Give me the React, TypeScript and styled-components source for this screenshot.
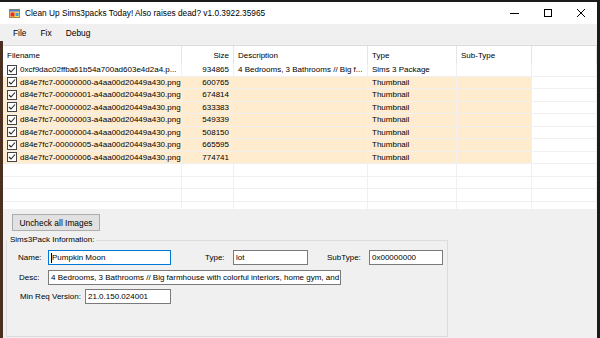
import React from "react";
import styled, { createGlobalStyle } from "styled-components";

const GlobalStyle = createGlobalStyle`
  html, body {
    margin: 0;
    padding: 0;
    background: #1b1b1b;
    overflow: hidden;
  }
  * { box-sizing: border-box; }
`;

const Screen = styled.div`
  width: 600px;
  height: 338px;
  padding-top: 2px;
  font-family: "Liberation Sans", Arial, sans-serif;
  color: #000;
`;

const Window = styled.div`
  width: 597px;
  height: 336px;
  display: flex;
  flex-direction: column;
  background: #f0f0f0;
`;

const TitleBar = styled.div`
  height: 22px;
  background: #fff;
  display: flex;
  align-items: center;
  padding-left: 9px;
`;

const Title = styled.span`
  margin-left: 5px;
  font-size: 8.3px;
  flex: 1;
  white-space: nowrap;
`;

const Controls = styled.div`
  display: flex;
  height: 100%;
`;

const ControlButton = styled.div`
  width: 33px;
  height: 100%;
  display: flex;
  align-items: center;
  justify-content: center;
`;

const MenuBar = styled.div`
  height: 17px;
  display: flex;
  align-items: center;
  padding-left: 6px;
  font-size: 8.4px;
`;

const MenuItem = styled.span`
  padding: 0 7px;
`;

const ClientArea = styled.div`
  flex: 1;
  display: flex;
  flex-direction: column;
  border-left: 3px solid #4a3020;
  padding-top: 4px;
`;

const ListView = styled.div`
  height: 164px;
  background: #fff;
  border-top: 1px solid #dcdcdc;
  overflow: hidden;
  font-size: 8px;
`;

const Row = styled.div`
  display: grid;
  grid-template-columns: 179px 52px 134px 89px 75px 1fr;
  height: 12.5px;
`;

const HeaderRow = styled(Row)`
  height: 18px;
`;

const HeaderCell = styled.div<{ $right?: boolean }>`
  display: flex;
  align-items: center;
  justify-content: ${(p) => (p.$right ? "flex-end" : "flex-start")};
  padding: 0 4px;
  border-right: 1px solid #e5e5e5;
  white-space: nowrap;
`;

const Cell = styled.div<{ $right?: boolean; $hl?: boolean }>`
  display: flex;
  align-items: center;
  justify-content: ${(p) => (p.$right ? "flex-end" : "flex-start")};
  padding: 0 4px;
  background: ${(p) => (p.$hl ? "#ffebcd" : "transparent")};
  border-right: 1px solid #f0f0f0;
  border-bottom: 1px solid #f0f0f0;
  white-space: nowrap;
  overflow: hidden;
`;

const Check = styled.span`
  width: 10px;
  height: 10px;
  flex: none;
  border: 1px solid #444;
  background: #fff;
  margin-right: 3px;
  display: flex;
  align-items: center;
  justify-content: center;
`;

const Bottom = styled.div`
  flex: 1;
  display: flex;
  flex-direction: column;
  padding: 5px 0 0 9px;
`;

const Button = styled.div`
  width: 88px;
  height: 17px;
  background: #e1e1e1;
  border: 1px solid #adadad;
  font-size: 8.4px;
  display: flex;
  align-items: center;
  justify-content: center;
  white-space: nowrap;
`;

const Group = styled.div`
  margin: 9px 0 0 -6px;
  width: 442px;
  height: 97px;
  border: 1px solid #dcdcdc;
  border-top: none;
  position: relative;
  padding-top: 10px;
`;

const GroupLegend = styled.div`
  position: absolute;
  top: -5px;
  left: 3px;
  font-size: 8px;
  background: #f0f0f0;
  padding-right: 2px;
`;

const GroupLine = styled.div`
  position: absolute;
  top: 0;
  left: 86px;
  right: 0;
  border-top: 1px solid #dcdcdc;
`;

const FieldRow = styled.div`
  display: flex;
  align-items: center;
  height: 15px;
  margin-bottom: 4.5px;
  padding-left: 11px;
  font-size: 8px;
`;

const Label = styled.span<{ $w: number; $ml?: number }>`
  width: ${(p) => p.$w}px;
  margin-left: ${(p) => p.$ml ?? 0}px;
  white-space: nowrap;
`;

const TextBox = styled.div<{ $w: number; $focus?: boolean }>`
  width: ${(p) => p.$w}px;
  height: 15px;
  background: #fff;
  border: 1px solid ${(p) => (p.$focus ? "#0078d7" : "#7a7a7a")};
  display: flex;
  align-items: center;
  padding-left: 2px;
  white-space: nowrap;
  overflow: hidden;
`;

const Caret = styled.span`
  width: 1px;
  height: 10px;
  background: #000;
  flex: none;
`;

const rows = [
  { name: "0xcf9dac02ffba61b54a700ad603e4d2a4.p...", size: "934865", desc: "4 Bedrooms, 3 Bathrooms // Big f...", type: "Sims 3 Package", hl: false },
  ...[600765, 674814, 633383, 549339, 508150, 665595, 774741].map((s, i) => ({
    name: `d84e7fc7-0000000${i}-a4aa00d20449a430.png`,
    size: String(s),
    desc: "",
    type: "Thumbnail",
    hl: true,
  })),
];

const AppIcon = () => (
  <svg width="11" height="11" viewBox="0 0 11 11">
    <rect x="0.5" y="1.5" width="10" height="8" fill="#f7d774" stroke="#b08a2a" />
    <rect x="0.5" y="1.5" width="10" height="2" fill="#4a7fd0" />
    <rect x="1.5" y="4.5" width="4" height="4" fill="#e0322a" />
    <rect x="6.5" y="5" width="3" height="3" fill="#3aa0e0" />
  </svg>
);

const CheckMark = () => (
  <svg width="8" height="8" viewBox="0 0 8 8">
    <path d="M1 4 L3 6 L7 1.5" fill="none" stroke="#222" strokeWidth="1.1" />
  </svg>
);

export default function App() {
  return (
    <Screen>
      <GlobalStyle />
      <Window>
        <TitleBar>
          <AppIcon />
          <Title>Clean Up Sims3packs Today! Also raises dead? v1.0.3922.35965</Title>
          <Controls>
            <ControlButton>
              <svg width="10" height="10" viewBox="0 0 10 10">
                <line x1="0" y1="5.5" x2="9" y2="5.5" stroke="#000" />
              </svg>
            </ControlButton>
            <ControlButton>
              <svg width="10" height="10" viewBox="0 0 10 10">
                <rect x="1.5" y="1.5" width="7" height="7" fill="none" stroke="#000" />
              </svg>
            </ControlButton>
            <ControlButton>
              <svg width="10" height="10" viewBox="0 0 10 10">
                <path d="M1 1 L9 9 M9 1 L1 9" stroke="#000" />
              </svg>
            </ControlButton>
          </Controls>
        </TitleBar>
        <MenuBar>
          <MenuItem>File</MenuItem>
          <MenuItem>Fix</MenuItem>
          <MenuItem>Debug</MenuItem>
        </MenuBar>
        <ClientArea>
          <ListView>
            <HeaderRow>
              <HeaderCell>Filename</HeaderCell>
              <HeaderCell $right>Size</HeaderCell>
              <HeaderCell>Description</HeaderCell>
              <HeaderCell>Type</HeaderCell>
              <HeaderCell>Sub-Type</HeaderCell>
              <HeaderCell />
            </HeaderRow>
            {rows.map((r) => (
              <Row key={r.name}>
                <Cell $hl={r.hl}>
                  <Check>
                    <CheckMark />
                  </Check>
                  {r.name}
                </Cell>
                <Cell $hl={r.hl} $right>
                  {r.size}
                </Cell>
                <Cell $hl={r.hl}>{r.desc}</Cell>
                <Cell $hl={r.hl}>{r.type}</Cell>
                <Cell $hl={r.hl} />
                <Cell />
              </Row>
            ))}
            {[0, 1, 2, 3].map((i) => (
              <Row key={i}>
                <Cell />
                <Cell />
                <Cell />
                <Cell />
                <Cell />
                <Cell />
              </Row>
            ))}
          </ListView>
          <Bottom>
            <Button>Uncheck all Images</Button>
            <Group>
              <GroupLine />
              <GroupLegend>Sims3Pack Information:</GroupLegend>
              <FieldRow>
                <Label $w={30}>Name:</Label>
                <TextBox $w={123} $focus>
                  <Caret />
                  Pumpkin Moon
                </TextBox>
                <Label $w={28} $ml={34}>
                  Type:
                </Label>
                <TextBox $w={75}>lot</TextBox>
                <Label $w={42} $ml={19}>
                  SubType:
                </Label>
                <TextBox $w={74}>0x00000000</TextBox>
              </FieldRow>
              <FieldRow>
                <Label $w={29} $ml={1}>
                  Desc:
                </Label>
                <TextBox $w={293}>
                  4 Bedrooms, 3 Bathrooms // Big farmhouse with colorful interiors, home gym, and large garden
                </TextBox>
              </FieldRow>
              <FieldRow>
                <Label $w={65} $ml={2}>
                  Min Req Version:
                </Label>
                <TextBox $w={86}>21.0.150.024001</TextBox>
              </FieldRow>
            </Group>
          </Bottom>
        </ClientArea>
      </Window>
    </Screen>
  );
}
